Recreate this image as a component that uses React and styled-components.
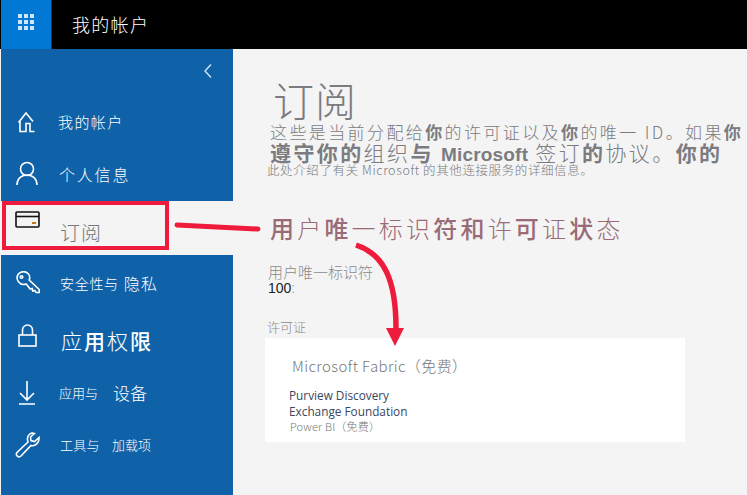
import React from 'react';
import styled, { createGlobalStyle } from 'styled-components';

const cjk = '"Noto Sans CJK SC", "Liberation Sans", sans-serif';

const GlobalStyle = createGlobalStyle`
    html, body {
        margin: 0;
        padding: 0;
        background: #f4f4f4;
    }
    body {
        font-family: ${cjk};
    }
`;

const Pagina = styled.div`
    position: relative;
    width: 747px;
    height: 495px;
    overflow: hidden;
    background: #f4f4f4;
`;

const BarraTopo = styled.header`
    display: flex;
    align-items: center;
    height: 49px;
    background: #000;
    color: #fff;
`;

const BotaoApps = styled.div`
    display: grid;
    grid-template-columns: repeat(3, 4px);
    grid-auto-rows: 4px;
    gap: 2px;
    align-content: center;
    justify-content: center;
    width: 51px;
    height: 49px;
    margin-left: 1px;
    padding-bottom: 5px;
    box-sizing: border-box;
    background: #0078d4;
    border-right: 1px solid #2a2a2a;
`;

const Ponto = styled.span`
    background: #cfe6f8;
`;

const TituloTopo = styled.h1`
    margin: 0 0 0 20px;
    font-size: 18px;
    font-weight: 300;
    line-height: 49px;
    letter-spacing: 1.3px;
`;

const Corpo = styled.div`
    display: flex;
    height: 446px;
`;

const Lateral = styled.nav`
    display: flex;
    flex-direction: column;
    width: 232px;
    margin-left: 1px;
    background: #0f62a8;
`;

const Recolher = styled.div`
    display: flex;
    justify-content: flex-end;
    align-items: center;
    height: 46px;
    padding: 0 20px 2px 0;
    box-sizing: border-box;
    color: #cfe6f8;
`;

const Item = styled.div`
    display: flex;
    align-items: center;
    height: ${(p) => p.$altura}px;
    padding-left: 14px;
    padding-top: ${(p) => p.$topo || 0}px;
    padding-bottom: ${(p) => p.$base || 0}px;
    box-sizing: border-box;
    color: ${(p) => (p.$ativo ? '#777' : '#fff')};
    background: ${(p) => (p.$ativo ? '#f4f4f4' : 'transparent')};
`;

const Icone = styled.svg`
    flex: none;
    width: 26px;
    height: 26px;
    margin-top: ${(p) => p.$sobe || 0}px;
    fill: none;
    stroke: ${(p) => p.$cor || '#fff'};
    stroke-width: 1.6;
`;

const Rotulo = styled.span`
    margin-left: ${(p) => p.$margem}px;
    font-size: ${(p) => p.$tam}px;
    font-weight: 300;
    letter-spacing: ${(p) => p.$esp || 0}px;
    white-space: nowrap;
    line-height: 1.2;

    b {
        font-weight: 500;
    }
`;

const Principal = styled.main`
    flex: 1;
    min-width: 0;
    padding: 27px 0 0 37px;
    color: #7b7b80;
    overflow: hidden;
`;

const Titulo = styled.h2`
    margin: 0 0 0 3px;
    height: 47px;
    font-size: 41px;
    font-weight: 300;
    line-height: 47px;
    letter-spacing: 1px;
`;

const Linha = styled.p`
    margin: ${(p) => p.$margem || '0'};
    height: ${(p) => p.$altura}px;
    font-size: ${(p) => p.$tam}px;
    font-weight: 300;
    letter-spacing: ${(p) => p.$esp || 0}px;
    line-height: ${(p) => p.$altura}px;
    white-space: nowrap;

    b {
        font-weight: 700;
    }
`;

const Latina = styled.b`
    font-family: "Liberation Sans", sans-serif;
    font-size: 19px;
    letter-spacing: 0.2px;
`;

const Anotacao = styled.div`
    margin-top: 32px;
    height: 40px;
    font-size: 24px;
    font-weight: 300;
    line-height: 40px;
    letter-spacing: 3.2px;
    color: #9a6b76;
    white-space: nowrap;

    b {
        font-weight: 500;
    }
`;

const Legenda = styled.div`
    margin: ${(p) => p.$margem};
    font-size: ${(p) => p.$tam}px;
    font-weight: 300;
    line-height: 18px;
    color: #8a8a8a;
`;

const Valor = styled.div`
    margin-left: -2px;
    font-family: "Liberation Sans", sans-serif;
    font-size: 14px;
    line-height: 15px;
    color: #222;

    span {
        color: #aaa;
    }
`;

const Cartao = styled.section`
    width: 420px;
    height: 104px;
    margin: 2px 0 0 -5px;
    padding: 16px 0 0 24px;
    box-sizing: border-box;
    background: #fff;
`;

const NomeProduto = styled.div`
    margin-left: 3px;
    font-family: "Noto Sans CJK SC", "Open Sans", sans-serif;
    font-size: 15px;
    font-weight: 300;
    line-height: 24px;
    letter-spacing: 0.4px;
    color: #777;
`;

const Plano = styled.div`
    margin-top: ${(p) => p.$topo || 0}px;
    font-family: "Open Sans", sans-serif;
    font-size: 11.8px;
    line-height: 16px;
    color: #3a4660;
`;

const PlanoGratis = styled.div`
    margin: 0 0 0 1px;
    font-size: 11px;
    font-weight: 300;
    line-height: 14px;
    letter-spacing: 0.2px;
    color: #777;
`;

const Destaque = styled.div`
    position: absolute;
    left: 2px;
    top: 201px;
    width: 167px;
    height: 49px;
    box-sizing: border-box;
    border: 4px solid #ee1b3c;
    pointer-events: none;
`;

const Setas = styled.svg`
    position: absolute;
    left: 0;
    top: 0;
    pointer-events: none;
`;

function App() {
    return (
        <Pagina>
            <GlobalStyle />
            <BarraTopo>
                <BotaoApps>
                    {Array.from({ length: 9 }).map((_, i) => (
                        <Ponto key={i} />
                    ))}
                </BotaoApps>
                <TituloTopo>我的帐户</TituloTopo>
            </BarraTopo>
            <Corpo>
                <Lateral>
                    <Recolher>
                        <svg width="10" height="16" viewBox="0 0 10 16" fill="none" stroke="currentColor" strokeWidth="1.4">
                            <path d="M8 1.5 2 8l6 6.5" />
                        </svg>
                    </Recolher>
                    <Item $altura={54}>
                        <Icone viewBox="0 0 26 26">
                            <path d="M3.5 13.5 11 4l7 8.5M5 12v10.500h6v-8h4v8h4.500" />
                        </Icone>
                        <Rotulo $margem={17} $tam={15} $esp={1.400}>我的帐户</Rotulo>
                    </Item>
                    <Item $altura={52}>
                        <Icone viewBox="0 0 26 26" $sobe={-4}>
                            <circle cx="12" cy="9" r="6.5" />
                            <path d="M2 25c0-6 4-10 10-10s10 4 10 10" />
                        </Icone>
                        <Rotulo $margem={18} $tam={16} $esp={1.800}>个人信息</Rotulo>
                    </Item>
                    <Item $altura={54} $ativo $topo={9}>
                        <Icone viewBox="0 0 26 26" $cor="#111" $sobe={-21}>
                            <rect x="1" y="3" width="23" height="15" rx="1" />
                            <path d="M1 7.500h23" />
                            <path d="M17 14h4" strokeWidth="2" stroke="#c47a18" />
                        </Icone>
                        <Rotulo $margem={19} $tam={20} $esp={1}>订阅</Rotulo>
                    </Item>
                    <Item $altura={58} $base={1}>
                        <Icone viewBox="0 0 26 26">
                            <path d="M2 7a6.500 6.500 0 0 1 11-4.500c2 2 2 4.500 1.200 6.500l10 9.500v3h-3l-1.500-2-2 .5-.5-2.500-2 .5-4-5c-3 1-6 0-7.500-2A7 7 0 0 1 2 7Z" />
                            <circle cx="6.500" cy="6" r="1.300" />
                        </Icone>
                        <Rotulo $margem={19} $tam={14} $esp={0.700}>安全性与</Rotulo>
                        <Rotulo $margem={5} $tam={16} $esp={1.200}>隐私</Rotulo>
                    </Item>
                    <Item $altura={54} $topo={2}>
                        <Icone viewBox="0 0 26 26" $sobe={-10}>
                            <rect x="4" y="12" width="17" height="11" />
                            <path d="M7.500 12V7a5 5 0 0 1 10 0v5" />
                        </Icone>
                        <Rotulo $margem={20} $tam={21} $esp={2}>应<b>用</b>权<b>限</b></Rotulo>
                    </Item>
                    <Item $altura={52}>
                        <Icone viewBox="0 0 26 26" $sobe={-2}>
                            <path d="M12 2v19M5 14l7 7 7-7M4 25h16" />
                        </Icone>
                        <Rotulo $margem={18} $tam={13}>应用与</Rotulo>
                        <Rotulo $margem={15} $tam={17}>设备</Rotulo>
                    </Item>
                    <Item $altura={52}>
                        <Icone viewBox="0 0 26 26">
                            <path d="M24 5.500 19.500 9.500 16 8.500 15.500 5 19.500 1.500C16 0 12 3 12.500 7.500c0 1 .3 1.500.5 2.500L2 20.500c-2 3 1.500 5.500 4 3.500L16 13.500c4 1 8.500-2.500 8-8Z" />
                        </Icone>
                        <Rotulo $margem={19} $tam={13} $esp={0.300}>工具与</Rotulo>
                        <Rotulo $margem={12} $tam={13}>加载项</Rotulo>
                    </Item>
                </Lateral>
                <Principal>
                    <Titulo>订阅</Titulo>
                    <Linha $altura={18} $tam={17} $esp={2.400}>
                        这些是当前分配给<b>你</b>的许可证以及<b>你</b>的唯一 ID。如果<b>你</b>
                    </Linha>
                    <Linha $altura={22} $tam={21} $esp={2.400}>
                        <b>遵守你的</b>组织<b>与</b> <Latina>Microsoft</Latina> 签订<b>的</b>协议。<b>你的</b>
                    </Linha>
                    <Linha $altura={12} $tam={12.500} $esp={0.600} $margem="1px 0 0 -3px">
                        此处介绍了有关 Microsoft 的其他连接服务的详细信息。
                    </Linha>
                    <Anotacao>
                        <b>用</b>户<b>唯</b>一标识<b>符和</b>许<b>可</b>证<b>状</b>态
                    </Anotacao>
                    <Legenda $margem="15px 0 0 -2px" $tam={15}>用户唯一标识符</Legenda>
                    <Valor>100<span>:</span></Valor>
                    <Legenda $margem="22px 0 0 -3px" $tam={13}>许可证</Legenda>
                    <Cartao>
                        <NomeProduto>Microsoft Fabric（免费）</NomeProduto>
                        <Plano $topo={9}>Purview Discovery</Plano>
                        <Plano>Exchange Foundation</Plano>
                        <PlanoGratis>Power BI（免费）</PlanoGratis>
                    </Cartao>
                </Principal>
            </Corpo>
            <Destaque />
            <Setas width="747" height="495" viewBox="0 0 747 495" fill="none">
                <path d="M177 225 L258 229" stroke="#ee1b3c" strokeWidth="5" strokeLinecap="round" />
                <path d="M356 245 C384 254 396 280 396 328" stroke="#ee1b3c" strokeWidth="5.500" />
                <path d="M386 328 H404 L395 346 Z" fill="#ee1b3c" />
            </Setas>
        </Pagina>
    );
}

export default App;
